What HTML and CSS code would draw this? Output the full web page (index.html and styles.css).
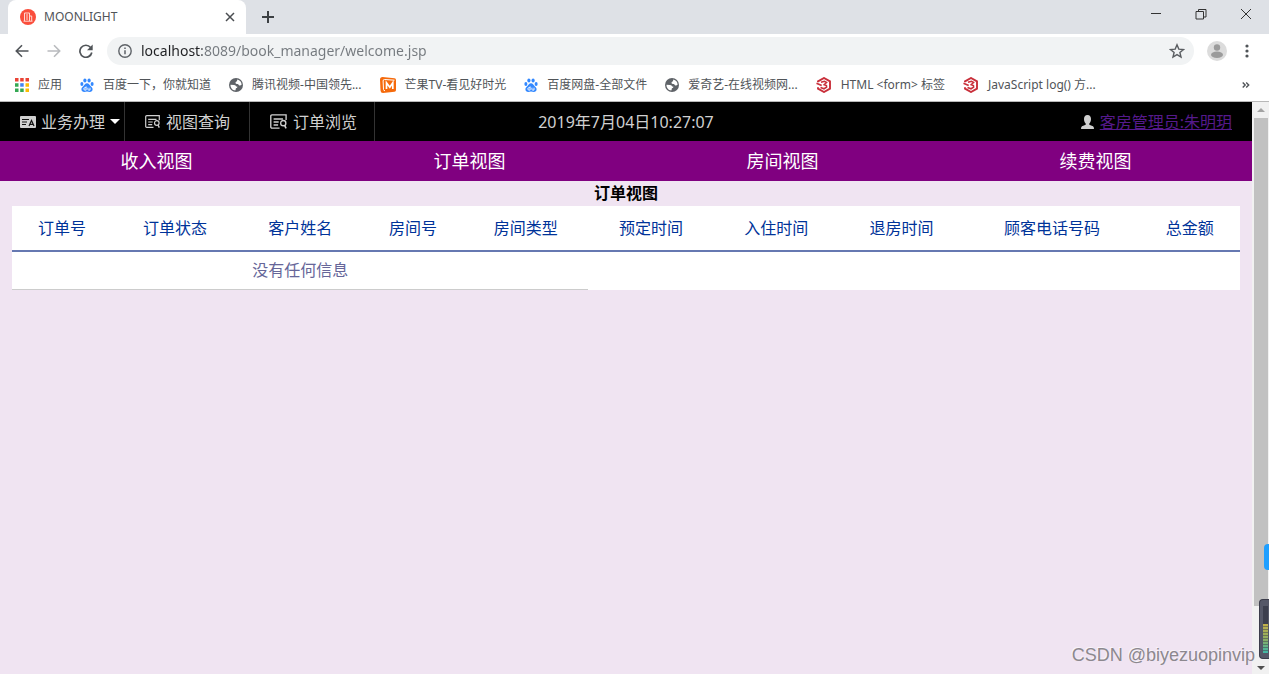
FILE: index.html
```
<!DOCTYPE html>
<html lang="zh-CN">
<head>
<meta charset="utf-8">
<title>MOONLIGHT</title>
<link rel="stylesheet" href="styles.css">
</head>
<body>
<svg class="defs" aria-hidden="true">
  <symbol id="paw" viewBox="0 0 14 14">
    <g fill="#3388ff">
      <ellipse cx="1.9" cy="6" rx="1.5" ry="2"/><ellipse cx="4.9" cy="2.5" rx="1.6" ry="2.1"/>
      <ellipse cx="9.1" cy="2.5" rx="1.6" ry="2.1"/><ellipse cx="12.1" cy="6" rx="1.5" ry="2"/>
      <path d="M7 5.200c1.900 0 2.400 1.600 3.500 2.700 1.100 1 2.100 1.800 2.100 3.400 0 1.700-1.300 2.600-2.800 2.600-1 0-1.800-.3-2.800-.3s-1.800.3-2.800.3c-1.500 0-2.800-.9-2.800-2.600 0-1.600 1-2.400 2.100-3.400C4.600 6.800 5.100 5.200 7 5.200z"/>
    </g>
    <path d="M6.100 8.400v3.700H5a1.200 1.200 0 0 1 0-2.400h1.100M7.900 9.700v1.600q0 .8.800.8h1.300V9.700" fill="none" stroke="#fff" stroke-width=".9"/>
  </symbol>
  <symbol id="globe" viewBox="0 0 14 14">
    <circle cx="7" cy="7" r="7" fill="#5f6368"/>
    <path d="M1.500 6.700 5 6.900c1.400.1 2 .7 2 1.700h1.300c.1 1-.3 1.600-1.400 1.700-.1 1-.3 1.600-.6 2.200C3.500 12.200 1.400 9.800 1.500 6.700z" fill="#fff"/>
    <path d="M8.300 1.600c2.500.5 4.300 2.600 4.300 5.100-.8.900-1.900 1-2.700.5-.4-.8-.8-1.200-2-1.200C6.800 5.900 6.300 5 6.600 4.200c.6-.4 1.600-.5 1.700-2.600z" fill="#fff"/>
  </symbol>
  <symbol id="hex" viewBox="0 0 16 16">
    <path d="M2 5.200V4.300L8 1l6 3.300v7.400L8 15l-6-3.300v-1.500" fill="none" stroke="#c9303b" stroke-width="1.900"/>
    <path d="M.5 6.200 5.700 8.600M5 5.300l3.500-1 2 1.200-2.300 2.200 2.200.9.200 1.600-2.600 1.600-3.500-1.300" fill="none" stroke="#c9303b" stroke-width="1.600"/>
  </symbol>
  <symbol id="formfind" viewBox="0 0 16 14">
    <path d="M8.500 12.400H1.700a1 1 0 0 1-1-1V1.700a1 1 0 0 1 1-1h12.600v4.500M3.200 4.300h8.300M3.200 7h4.500M3.200 9.700h4" fill="none" stroke="currentColor" stroke-width="1.200"/>
    <circle cx="11.800" cy="8" r="2.300" fill="none" stroke="currentColor" stroke-width="1.200"/>
    <path d="m13 10 1.300 2.600" stroke="currentColor" stroke-width="1.400"/>
  </symbol>
</svg>

<header class="browser">
  <div class="tabstrip">
    <div class="tab">
      <svg class="favicon" viewBox="0 0 16 16"><circle cx="8" cy="8" r="8" fill="#fa4e3c"/><path d="M4.500 12V4h5v8M9.500 7h2.200v5M3.500 12.200h9M6 6h2M6 8h2M6 10h2" fill="none" stroke="#ffd9d3" stroke-width="1"/></svg>
      <span class="tab-title">MOONLIGHT</span>
      <button class="icon-btn" aria-label="关闭标签页"><svg width="10" height="10" viewBox="0 0 10 10"><path d="m1 1 8 8M9 1 1 9" stroke="#4a4d51" stroke-width="1.500"/></svg></button>
    </div>
    <button class="icon-btn new-tab" aria-label="新标签页"><svg width="14" height="14" viewBox="0 0 14 14"><path d="M7 1v12M1 7h12" stroke="#3c4043" stroke-width="2"/></svg></button>
    <div class="window-buttons">
      <button class="icon-btn" aria-label="最小化"><svg width="12" height="12" viewBox="0 0 12 12"><path d="M1 5.500h10" stroke="#333"/></svg></button>
      <button class="icon-btn" aria-label="还原"><svg width="12" height="12" viewBox="0 0 12 12"><path d="M1 3.500h7.500V11H1zM3.500 3.500v-2H11v7.500H8.500" fill="none" stroke="#333"/></svg></button>
      <button class="icon-btn" aria-label="关闭"><svg width="12" height="12" viewBox="0 0 12 12"><path d="m1 1 10 10M11 1 1 11" stroke="#333"/></svg></button>
    </div>
  </div>

  <div class="toolbar">
    <button class="icon-btn" aria-label="后退"><svg width="14" height="14" viewBox="0 0 14 14"><path d="M13.500 7H1.500M7 1.300 1.300 7 7 12.700" fill="none" stroke="#505458" stroke-width="1.600"/></svg></button>
    <button class="icon-btn" aria-label="前进"><svg width="14" height="14" viewBox="0 0 14 14"><path d="M.5 7h12M7 1.300 12.700 7 7 12.700" fill="none" stroke="#b9bbbe" stroke-width="1.600"/></svg></button>
    <button class="icon-btn" aria-label="重新加载"><svg width="14" height="14" viewBox="0 0 14 14"><path d="M11.600 3.500A6 6 0 1 0 12.800 8.500" fill="none" stroke="#505458" stroke-width="1.700"/><path d="M13.700.5v5.800H8z" fill="#505458"/></svg></button>
    <div class="omnibox">
      <svg width="14" height="14" viewBox="0 0 14 14"><circle cx="7" cy="7" r="6.200" fill="none" stroke="#5f6368" stroke-width="1.400"/><path d="M7 6.200v4M7 3.500V5" stroke="#5f6368" stroke-width="1.500"/></svg>
      <input class="url" type="text" aria-label="地址" value="localhost:8089/book_manager/welcome.jsp">
      <button class="icon-btn" aria-label="添加书签"><svg width="16" height="16" viewBox="0 0 16 16"><path d="m8 1.800 1.800 4.300 4.700.4-3.600 3 1.100 4.600L8 11.600l-4 2.500 1.100-4.600-3.600-3 4.700-.4z" fill="none" stroke="#5a5d61" stroke-width="1.400"/></svg></button>
    </div>
    <button class="icon-btn profile" aria-label="用户"><svg width="20" height="20" viewBox="0 0 20 20"><circle cx="10" cy="10" r="10" fill="#dcdcdc"/><circle cx="10" cy="6.500" r="3.200" fill="#9b9b9b"/><ellipse cx="10" cy="13.800" rx="6" ry="3.200" fill="#9b9b9b"/></svg></button>
    <button class="icon-btn" aria-label="菜单"><svg width="4" height="14" viewBox="0 0 4 14" fill="#505458"><circle cx="2" cy="2" r="1.600"/><circle cx="2" cy="7" r="1.600"/><circle cx="2" cy="12" r="1.600"/></svg></button>
  </div>

  <nav class="bookmarks" aria-label="书签">
    <a href="#"><svg width="14" height="14" viewBox="0 0 14 14"><path d="M0 0h3.500v3.500H0zM5.200 0h3.500v3.500H5.200zM10.500 0H14v3.500h-3.500z" fill="#ea4335"/><path d="M0 5.200h3.500v3.500H0zM0 10.500h3.500V14H0zM5.200 10.500h3.500V14H5.200z" fill="#34a853"/><path d="M5.200 5.200h3.500v3.500H5.200z" fill="#4285f4"/><path d="M10.500 5.200H14v3.500h-3.500zM10.500 10.500H14V14h-3.500z" fill="#fbbc05"/></svg>应用</a>
    <a href="#"><svg width="14" height="14"><use href="#paw"/></svg>百度一下，你就知道</a>
    <a href="#"><svg width="14" height="14"><use href="#globe"/></svg>腾讯视频-中国领先...</a>
    <a href="#"><svg width="16" height="16" viewBox="0 0 16 16"><path d="M2.500 0 14.500 1.300Q16 1.500 16 3v10q0 1.500-1.500 1.700L3 16Q.7 16 .5 13.500L0 2.500Q0 0 2.500 0z" fill="#f56a0c"/><path d="M14.500 3.200 4.500 2.500Q3 2.500 3.100 4l.4 8.500q.1 1.300 1.500 1.200" fill="none" stroke="#fff" stroke-width="1"/><path d="M6.500 12V5.800l3.300 4.400 3-4.400V12" fill="none" stroke="#fff" stroke-width="1.700"/></svg>芒果TV-看见好时光</a>
    <a href="#"><svg width="14" height="14"><use href="#paw"/></svg>百度网盘-全部文件</a>
    <a href="#"><svg width="14" height="14"><use href="#globe"/></svg>爱奇艺-在线视频网...</a>
    <a href="#"><svg width="16" height="16"><use href="#hex"/></svg>HTML &lt;form&gt; 标签</a>
    <a href="#"><svg width="16" height="16"><use href="#hex"/></svg>JavaScript log() 方...</a>
    <button class="icon-btn more" aria-label="更多书签"><svg width="8" height="6" viewBox="0 0 8 6"><path d="m.7.5 2.500 2.500L.7 5.500M4.200.5 6.700 3 4.200 5.500" fill="none" stroke="#505458" stroke-width="1.400"/></svg></button>
  </nav>
</header>

<div class="viewport">
  <main class="page">
    <div class="topbar">
      <nav class="menu">
        <a href="#"><svg width="16" height="12" viewBox="0 0 16 12"><rect width="16" height="12" rx="1" fill="currentColor"/><path d="M2 3.500h7M2 6h5M2 8.500h4M9 10l2.500-5.500L14 10M10 8.300h3" fill="none" stroke="#111" stroke-width="1.200"/></svg>业务办理<svg class="caret" width="10" height="5" viewBox="0 0 10 5"><path d="M0 0h10L5 5z" fill="#fff"/></svg></a>
        <a href="#"><svg width="16" height="14"><use href="#formfind"/></svg>视图查询</a>
        <a href="#"><svg width="18" height="16"><use href="#formfind"/></svg>订单浏览</a>
      </nav>
      <time class="clock">2019年7月04日10:27:07</time>
      <div class="user">
        <svg width="13" height="14" viewBox="0 0 13 14"><path d="M6.500 0C9 0 10 1.800 10 4c0 2-.8 3.500-1.700 4.500v1.200l3.700 1.500q1 .5 1 2.800H0q0-2.300 1-2.800l3.700-1.500V8.500C3.800 7.500 3 6 3 4c0-2.200 1-4 3.500-4z" fill="#d0d0d0"/></svg>
        <a href="#">客房管理员:朱明玥</a>
      </div>
    </div>
    <nav class="views">
      <a href="#">收入视图</a>
      <a href="#">订单视图</a>
      <a href="#">房间视图</a>
      <a href="#">续费视图</a>
    </nav>
    <h1 class="heading">订单视图</h1>
    <div class="table-wrap">
      <table class="orders">
        <thead>
          <tr><th>订单号</th><th>订单状态</th><th>客户姓名</th><th>房间号</th><th>房间类型</th><th>预定时间</th><th>入住时间</th><th>退房时间</th><th>顾客电话号码</th><th>总金额</th></tr>
        </thead>
        <tbody>
          <tr><td colspan="5">没有任何信息</td></tr>
        </tbody>
      </table>
    </div>
  </main>
  <div class="scrollbar">
    <svg viewBox="0 0 8 4"><path d="M0 4h8L4 0z" fill="#a3a3a3"/></svg>
    <div class="track"><div class="thumb"></div></div>
    <svg viewBox="0 0 8 4"><path d="M0 0h8L4 4z" fill="#505050"/></svg>
  </div>
</div>

<div class="side-handle"></div>
<div class="meter"><div class="level"></div></div>
<div class="watermark">CSDN @biyezuopinvip</div>
</body>
</html>
```
FILE: styles.css
```
* { box-sizing: border-box; }
body {
  margin: 0;
  height: 100vh;
  display: flex;
  flex-direction: column;
  overflow: hidden;
  font: 16px/24px "Noto Sans", "Noto Sans CJK SC", sans-serif;
  background: #f0e4f2;
}
svg { display: block; flex: none; }
.defs { position: absolute; width: 0; height: 0; }
a { color: inherit; text-decoration: none; }
.icon-btn {
  display: flex;
  align-items: center;
  justify-content: center;
  padding: 0;
  border: 0;
  background: none;
}

.browser { background: #fff; border-bottom: 1px solid #b8b8b8; }
.tabstrip { display: flex; height: 34px; padding: 0 1px 0 8px; background: #dee1e6; }
.tab {
  display: flex;
  align-items: center;
  gap: 8px;
  width: 238px;
  padding: 0 11px 0 12px;
  background: #fff;
  border-radius: 8px 8px 0 0;
  font-size: 12px;
  color: #505458;
}
.favicon { width: 16px; height: 16px; }
.tab-title { flex: 1; }
.new-tab { width: 44px; }
.window-buttons { display: flex; margin-left: auto; height: 28px; }
.window-buttons .icon-btn { width: 45px; }

.toolbar { display: flex; align-items: center; height: 34px; padding: 0 20px 0 15px; gap: 18px; }
.omnibox {
  flex: 1;
  display: flex;
  align-items: center;
  gap: 9px;
  height: 28px;
  margin-left: -4px;
  padding: 0 9px 0 11px;
  border-radius: 14px;
  background: #f1f3f4;
}
.url {
  flex: 1;
  min-width: 0;
  padding: 0;
  border: 0;
  outline: 0;
  font: 14px/24px "Noto Sans", sans-serif;
  color: #74797e;
  background: linear-gradient(90deg, #202124 61px, #74797e 61px);
  -webkit-background-clip: text;
  background-clip: text;
  -webkit-text-fill-color: transparent;
}
.profile { margin-left: -5px; }

.bookmarks {
  display: flex;
  align-items: center;
  gap: 18px;
  height: 33px;
  padding: 0 19px 0 15px;
  font-size: 12px;
  color: #505458;
}
.bookmarks a { display: flex; align-items: center; gap: 9px; white-space: nowrap; }
.more { margin-left: auto; }

.viewport { flex: 1; display: flex; min-height: 0; }
.page { flex: 1; min-width: 0; overflow: hidden; }
.topbar {
  display: grid;
  grid-template-columns: 1fr auto 1fr;
  align-items: center;
  height: 39px;
  background: #000;
  color: #d0d0d0;
}
.menu { display: flex; height: 39px; }
.menu a {
  display: flex;
  align-items: center;
  gap: 5px;
  width: 125px;
  padding-left: 20px;
  border-right: 1px solid #333;
  white-space: nowrap;
}
.user { display: flex; align-items: center; justify-content: flex-end; gap: 6px; padding-right: 20px; }
.user a { color: #551a8b; text-decoration: underline; }

.views { display: grid; grid-template-columns: repeat(4, 1fr); background: #800080; }
.views a { padding: 8px 0; text-align: center; font-size: 18px; color: #fff; }
.heading { margin: 0; text-align: center; font-size: 16px; line-height: 25px; color: #000; }

.table-wrap { padding: 0 12px; }
.orders { width: 100%; border-collapse: collapse; background: #fff; }
.orders th, .orders td { padding: 0 8px; font-weight: 400; text-align: center; }
.orders th { height: 45px; border-bottom: 2px solid #6678b1; color: #003399; }
.orders td { height: 38px; border-bottom: 1px solid #ccc; color: #666699; }

.scrollbar {
  display: flex;
  flex-direction: column;
  align-items: center;
  width: 17px;
  padding: 6px 0 4px;
  gap: 6px;
  background: #f1f1f1;
}
.scrollbar svg { width: 8px; height: 4px; }
.track { flex: 1; width: 14px; }
.thumb { height: 90%; background: #c1c1c1; }

.side-handle {
  position: absolute;
  right: 0;
  top: 544px;
  width: 5px;
  height: 26px;
  border-radius: 4px 0 0 4px;
  background: #1e9fff;
}
.meter {
  position: absolute;
  right: 0;
  top: 599px;
  width: 10px;
  height: 60px;
  padding: 6px 1px 5px 3px;
  border: 1px solid #3a3c4a;
  border-right: 0;
  border-radius: 4px 0 0 4px;
  background: #555868;
}
.level {
  height: 100%;
  background:
    repeating-linear-gradient(to bottom, rgba(60, 63, 78, 0) 0 2px, rgba(60, 63, 78, 0.5) 2px 3px),
    linear-gradient(to bottom, #3c3f4e 38%, #c2b04a 38%, #8fae62 70%, #3fb8a8 100%);
}
.watermark {
  position: absolute;
  right: 14px;
  bottom: 7px;
  font: 18px/24px "Liberation Sans", sans-serif;
  color: #8c888e;
  text-shadow: -1px -1px 0 #f8f4fa;
}
```
